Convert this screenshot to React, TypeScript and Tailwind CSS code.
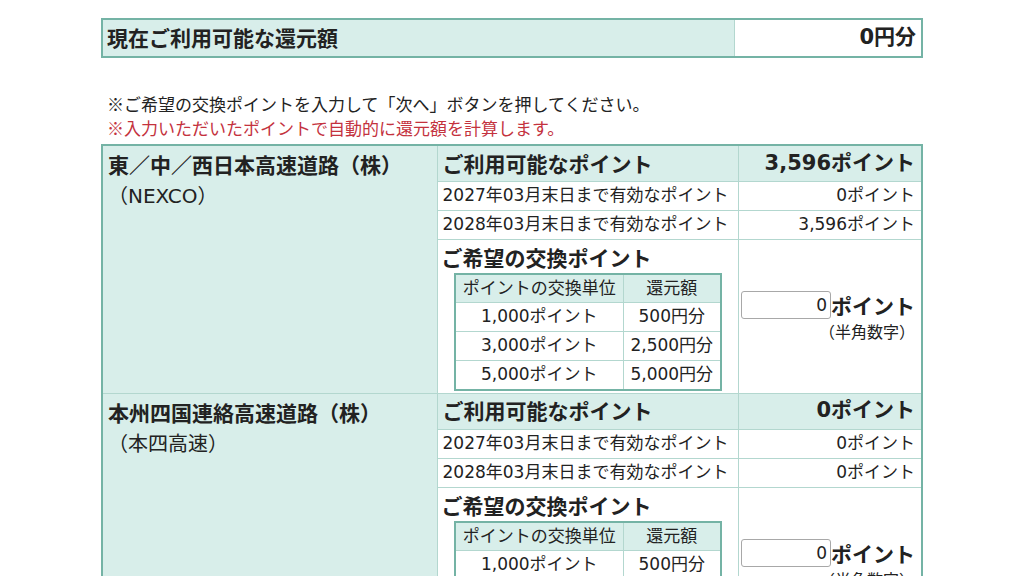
import React from 'react';

type Company = {
  name: string;
  short: string;
  total: string;
  expiring: { label: string; points: string }[];
};

const companies: Company[] = [
  {
    name: '東／中／西日本高速道路（株）',
    short: '（NEXCO）',
    total: '3,596ポイント',
    expiring: [
      { label: '2027年03月末日まで有効なポイント', points: '0ポイント' },
      { label: '2028年03月末日まで有効なポイント', points: '3,596ポイント' },
    ],
  },
  {
    name: '本州四国連絡高速道路（株）',
    short: '（本四高速）',
    total: '0ポイント',
    expiring: [
      { label: '2027年03月末日まで有効なポイント', points: '0ポイント' },
      { label: '2028年03月末日まで有効なポイント', points: '0ポイント' },
    ],
  },
];

const rates = [
  { unit: '1,000ポイント', value: '500円分' },
  { unit: '3,000ポイント', value: '2,500円分' },
  { unit: '5,000ポイント', value: '5,000円分' },
];

// wider latin digits, kana/kanji fall through to Noto
const numFont = "font-['DejaVu_Sans','Noto_Sans_CJK_JP',sans-serif]";

function RateTable() {
  return (
    <table className={`ml-[16px] border-collapse border-2 border-[#74b3a5] text-[17px] ${numFont}`}>
      <thead>
        <tr className="h-[29px] bg-[#d8eeea]">
          <th className="w-[169px] border border-[#b3d7cf] font-normal">ポイントの交換単位</th>
          <th className="w-[97px] border border-[#b3d7cf] font-normal">還元額</th>
        </tr>
      </thead>
      <tbody>
        {rates.map((r) => (
          <tr key={r.unit} className="h-[29px]">
            <td className="border border-[#b3d7cf] text-center">{r.unit}</td>
            <td className="border border-[#b3d7cf] text-center">{r.value}</td>
          </tr>
        ))}
      </tbody>
    </table>
  );
}

function CompanyRows({ c }: { c: Company }) {
  return (
    <>
      <tr className="h-[36px]">
        <td rowSpan={4} className="w-[335px] border border-[#b3d7cf] bg-[#d8eeea] pl-[5px] align-top">
          <div className="pt-[3px] text-[21px] font-bold leading-[30px]">{c.name}</div>
          <div className={`text-[20px] leading-[34px] ${numFont}`}>{c.short}</div>
        </td>
        <td className="w-[301px] border border-[#b3d7cf] bg-[#d8eeea] pl-[5px] text-[21px] font-bold">
          ご利用可能なポイント
        </td>
        <td className={`border border-[#b3d7cf] bg-[#d8eeea] pr-[6px] text-right text-[21px] font-bold ${numFont}`}>
          {c.total}
        </td>
      </tr>
      {c.expiring.map((e) => (
        <tr key={e.label} className={`h-[29px] text-[17px] ${numFont}`}>
          <td className="border border-[#b3d7cf] pl-[5px]">{e.label}</td>
          <td className="border border-[#b3d7cf] pr-[6px] text-right">{e.points}</td>
        </tr>
      ))}
      <tr className="h-[154px]">
        <td className="border border-[#b3d7cf] pt-[3px] pb-[2px] align-top">
          <div className="pl-[4px] text-[21px] font-bold leading-[28px]">ご希望の交換ポイント</div>
          <div className="mt-[2px]">
            <RateTable />
          </div>
        </td>
        <td className="border border-[#b3d7cf] pr-[6px] text-right align-middle">
          <div className="flex items-center justify-end">
            <input
              type="text"
              defaultValue="0"
              className={`h-[28px] w-[90px] rounded-[3px] border border-[#a8a8a8] bg-white pr-[3px] text-right text-[17px] text-[#222] outline-none ${numFont}`}
            />
            <span className="text-[21px] font-bold leading-[28px]">ポイント</span>
          </div>
          <div className="mt-[2px] text-[16px] leading-[20px]">（半角数字）</div>
        </td>
      </tr>
    </>
  );
}

export default function App() {
  return (
    <div className="min-h-screen bg-white pt-[18px] font-['Noto_Sans_CJK_JP',sans-serif] text-[#222]">
      <div className="mx-auto w-[822px]">
        {/* current refund amount */}
        <div className="flex h-[40px] border-2 border-[#74b3a5]">
          <div className="flex flex-1 items-center bg-[#d8eeea] pl-[4px] text-[21px] font-bold">
            現在ご利用可能な還元額
          </div>
          <div className={`flex w-[187px] items-center justify-end border-l border-[#b3d7cf] bg-white pr-[5px] text-[21px] font-bold ${numFont}`}>
            0円分
          </div>
        </div>

        <div className="mt-[34px] pl-[6px] text-[17px] leading-[24px]">
          <p>※ご希望の交換ポイントを入力して「次へ」ボタンを押してください。</p>
          <p className="text-[#c4323e]">※入力いただいたポイントで自動的に還元額を計算します。</p>
        </div>

        <table className="mt-[4px] w-full border-collapse border-2 border-[#74b3a5]">
          <tbody>
            {companies.map((c) => (
              <CompanyRows key={c.name} c={c} />
            ))}
          </tbody>
        </table>
      </div>
    </div>
  );
}
